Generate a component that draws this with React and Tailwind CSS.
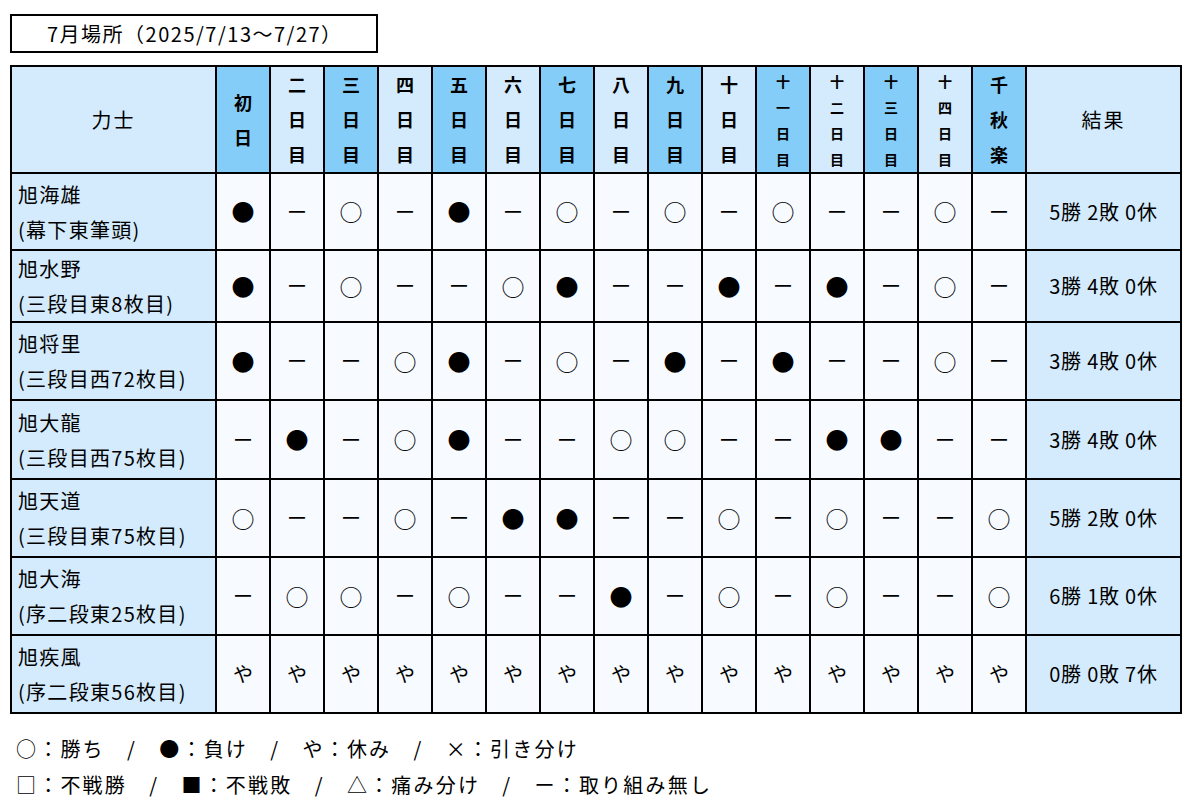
import React from 'react';

const days = [
    { chars: ['初', '日'], dark: true },
    { chars: ['二', '日', '目'] },
    { chars: ['三', '日', '目'], dark: true },
    { chars: ['四', '日', '目'] },
    { chars: ['五', '日', '目'], dark: true },
    { chars: ['六', '日', '目'] },
    { chars: ['七', '日', '目'], dark: true },
    { chars: ['八', '日', '目'] },
    { chars: ['九', '日', '目'], dark: true },
    { chars: ['十', '日', '目'] },
    { chars: ['十', '一', '日', '目'], dark: true },
    { chars: ['十', '二', '日', '目'] },
    { chars: ['十', '三', '日', '目'], dark: true },
    { chars: ['十', '四', '日', '目'] },
    { chars: ['千', '秋', '楽'], dark: true },
];

const rikishi = [
    { name: '旭海雄', rank: '(幕下東筆頭)', res: '●ー○ー●ー○ー○ー○ーー○ー', total: '5勝 2敗 0休', h: 'h-[77px]' },
    { name: '旭水野', rank: '(三段目東8枚目)', res: '●ー○ーー○●ーー●ー●ー○ー', total: '3勝 4敗 0休', h: 'h-[72px]' },
    { name: '旭将里', rank: '(三段目西72枚目)', res: '●ーー○●ー○ー●ー●ーー○ー', total: '3勝 4敗 0休', h: 'h-[78px]' },
    { name: '旭大龍', rank: '(三段目西75枚目)', res: 'ー●ー○●ーー○○ーー●●ーー', total: '3勝 4敗 0休', h: 'h-[79px]' },
    { name: '旭天道', rank: '(三段目東75枚目)', res: '○ーー○ー●●ーー○ー○ーー○', total: '5勝 2敗 0休', h: 'h-[78px]' },
    { name: '旭大海', rank: '(序二段東25枚目)', res: 'ー○○ー○ーー●ー○ー○ーー○', total: '6勝 1敗 0休', h: 'h-[78px]' },
    { name: '旭疾風', rank: '(序二段東56枚目)', res: 'ややややややややややややややや', total: '0勝 0敗 7休', h: 'h-[78px]' },
];

function DayHead({ day }) {
    const small = day.chars.length === 4;
    return (
        <th className={`border-2 border-black p-0 align-middle ${day.dark ? 'bg-[#84cdf8]' : 'bg-[#d4ebfd]'}`}>
            <div className={`flex flex-col items-center font-bold ${small ? 'text-[14px] leading-[26px]' : 'text-[18px] leading-[35px]'}`}>
                {day.chars.map((c, i) => (
                    <span key={i}>{c}</span>
                ))}
            </div>
        </th>
    );
}

function Mark({ s }) {
    // circles render small in the CJK font, so bump them up
    const big = s === '●' || s === '○';
    return <span className={big ? 'text-[23px]' : 'text-[20px]'}>{s}</span>;
}

export default function App() {
    return (
        <div className="min-h-[804px] bg-white text-black font-['Noto_Sans_CJK_JP','Noto_Sans',sans-serif] pt-[14px] pl-[10px]">
            <div className="w-[368px] h-[39px] border-2 border-black flex items-center pl-[35px] text-[20px] tracking-[1.5px]">
                7月場所（2025/7/13〜7/27）
            </div>

            <table className="mt-[12px] w-[1170px] table-fixed border-collapse border-2 border-black">
                <colgroup>
                    <col className="w-[205px]" />
                    {days.map((_, i) => (
                        <col key={i} className="w-[54px]" />
                    ))}
                    <col className="w-[155px]" />
                </colgroup>
                <thead>
                    <tr className="h-[107px]">
                        <th className="border-2 border-black bg-[#d4ebfd] font-normal text-[20px] tracking-[2px]">力士</th>
                        {days.map((d, i) => (
                            <DayHead key={i} day={d} />
                        ))}
                        <th className="border-2 border-black bg-[#d4ebfd] font-normal text-[20px] tracking-[2px]">結果</th>
                    </tr>
                </thead>
                <tbody>
                    {rikishi.map((r) => (
                        <tr key={r.name} className={r.h}>
                            <td className="border-2 border-black bg-[#d4ebfd] pl-[6px] text-[20px] tracking-[1.3px] leading-[35px]">
                                <div>{r.name}</div>
                                <div>{r.rank}</div>
                            </td>
                            {[...r.res].map((s, i) => (
                                <td key={i} className="border-2 border-black bg-[#f7fbff] text-center leading-none">
                                    <Mark s={s} />
                                </td>
                            ))}
                            <td className="border-2 border-black bg-[#d4ebfd] text-center text-[20px] tracking-[0.8px]">{r.total}</td>
                        </tr>
                    ))}
                </tbody>
            </table>

            <div className="mt-[17px] pl-[6px] text-[20px] tracking-[2.2px] leading-[36px]">
                <div>○：勝ち　/　●：負け　/　や：休み　/　×：引き分け</div>
                <div>□：不戦勝　/　■：不戦敗　/　△：痛み分け　/　ー：取り組み無し</div>
            </div>
        </div>
    );
}
